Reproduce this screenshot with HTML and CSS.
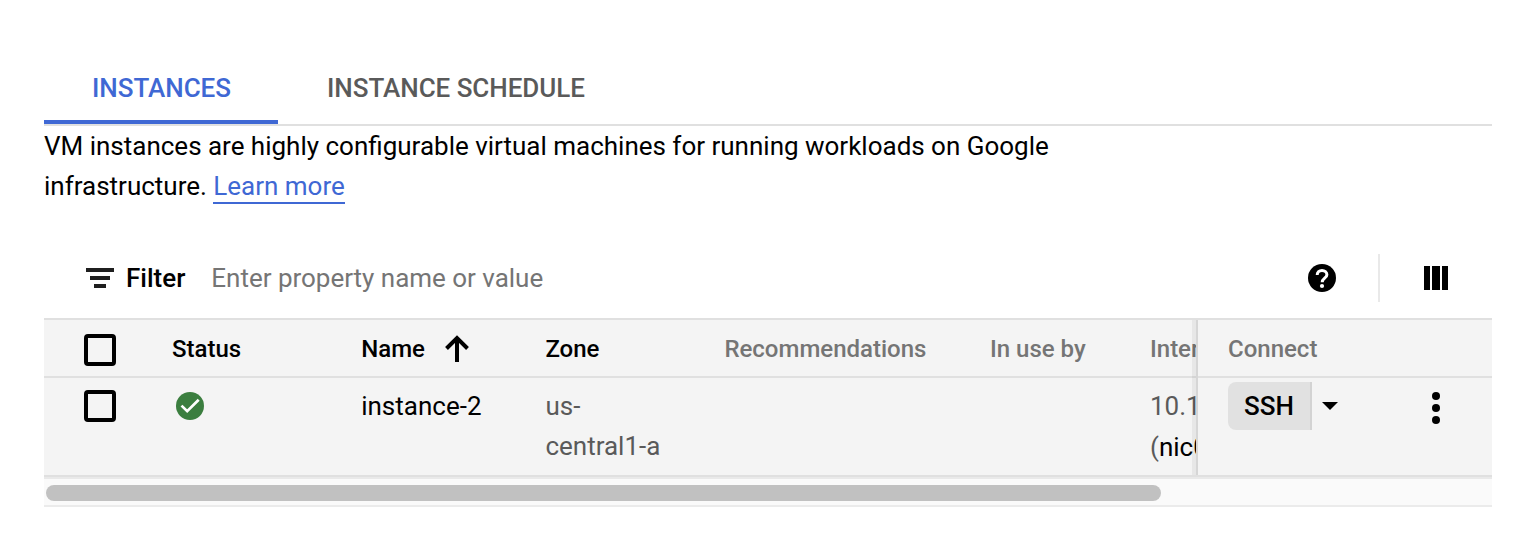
FILE: index.html
```html
<!DOCTYPE html>
<html lang="en">
<head>
<meta charset="utf-8">
<title>VM instances</title>
<link rel="stylesheet" href="styles.css">
</head>
<body>
<main class="page">
  <nav class="tabs">
    <a class="tab tab-active">INSTANCES</a>
    <a class="tab">INSTANCE SCHEDULE</a>
  </nav>
  <p class="intro">VM instances are highly configurable virtual machines for running workloads on Google infrastructure. <a class="link">Learn more</a></p>

  <section class="toolbar">
    <svg class="filter-icon" width="28" height="20" viewBox="0 0 28 20" fill="#1f1f1f"><path d="M0 0h28v4H0zM4 8h20v4H4zM8 16h12v4H8z"/></svg>
    <span class="filter-label">Filter</span>
    <span class="filter-hint">Enter property name or value</span>
    <svg class="help-icon" width="28" height="28" viewBox="0 0 28 28"><circle cx="14" cy="14" r="14"/><path d="M9.200 11C9.200 8.200 11.300 6.400 14 6.400s4.900 1.800 4.900 4.300c0 3.400-4.700 3.700-4.700 7.500" fill="none" stroke="#fff" stroke-width="3"/><circle cx="14" cy="22" r="2.100" fill="#fff"/></svg>
    <span class="divider"></span>
    <svg class="columns-icon" width="24" height="24" viewBox="0 0 24 24"><path d="M0 0h6v24H0zM8 0h8v24H8zM18 0h6v24h-6z"/></svg>
  </section>

  <section class="table">
    <div class="scroller">
      <div class="row head">
        <span class="box"></span>
        <span>Status</span>
        <span class="sorted">Name
          <svg class="arrow" width="24" height="27" viewBox="0 0 24 27" fill="none" stroke="#000" stroke-width="4"><path d="M12 27V3M1.500 13.500L12 3l10.500 10.500"/></svg>
        </span>
        <span>Zone</span>
        <span class="muted">Recommendations</span>
        <span class="muted">In use by</span>
        <span class="muted">Internal IP</span>
      </div>
      <div class="row body">
        <span class="box"></span>
        <span class="status"><svg width="28" height="28" viewBox="0 0 28 28"><circle cx="14" cy="14" r="14" fill="#3b7e3f"/><path d="M5.500 13.600l5.700 5.600L22.700 7.700" fill="none" stroke="#fff" stroke-width="2.700"/></svg></span>
        <span>instance-2</span>
        <span class="grey">us-<br>central1-a</span>
        <span></span>
        <span></span>
        <span class="grey address"><span>10.1</span><span class="nic-line">(<a class="nic">nic0</a></span></span>
      </div>
    </div>
    <div class="pinned">
      <div class="pinned-head">Connect</div>
      <div class="pinned-body">
        <button class="ssh">SSH</button>
        <svg class="caret" width="16" height="8" viewBox="0 0 16 8"><path d="M0 0h16L8 8z"/></svg>
        <svg class="more" width="8" height="32" viewBox="0 0 8 32"><circle cx="4" cy="4" r="4"/><circle cx="4" cy="16" r="4"/><circle cx="4" cy="28" r="4"/></svg>
      </div>
    </div>
  </section>
  <div class="scrollbar"><div class="thumb"></div></div>
</main>
</body>
</html>
```
FILE: styles.css
```css
* { box-sizing: border-box; }
body { margin: 0; background: #fff; color: #000; font: 400 26px/40px Roboto, sans-serif; }
svg { display: block; flex: none; }
.page { width: 1530px; height: 534px; padding: 52px 38px 0 44px; overflow: hidden; }
.tabs { display: flex; height: 74px; border-bottom: 2px solid #e0e0e0; }
.tab { height: 72px; padding: 0 48px; line-height: 72px; font-weight: 500; color: #5a5a5a; white-space: nowrap; letter-spacing: -0.04px; }
.tab-active { width: 234px; margin-right: 1px; color: #3f68d4; border-bottom: 4px solid #3f68d4; }
.intro { width: 1040px; height: 112px; margin: 0; word-spacing: -0.05px; }
.link { display: inline-block; height: 38px; color: #3f68d4; border-bottom: 2px solid #3f68d4; }
.toolbar { display: flex; align-items: center; height: 80px; padding: 0 44px 0 42px; }
.filter-label { margin-left: 12px; font-weight: 500; }
.filter-hint { margin-left: 26px; color: #757575; letter-spacing: -0.02px; }
.help-icon { margin-left: auto; }
.divider { width: 2px; height: 48px; margin: 0 44px 0 42px; background: #e9e9e9; }
.table { display: flex; height: 159px; background: #f4f4f4; border-top: 2px solid #e0e0e0; border-bottom: 2px solid #e0e0e0; }
.scroller { position: relative; width: 1152px; overflow: hidden; }
.scroller::after { content: ""; position: absolute; top: 0; right: 0; width: 4px; height: 155px; background: rgba(0, 0, 0, .05); }
.row { display: grid; grid-template-columns: 88px 189.200px 184.200px 179px 265.600px 160px 200px; width: 1306px; padding-left: 40px; white-space: nowrap; }
.head { height: 58px; font-size: 24px; font-weight: 500; line-height: 58px; border-bottom: 2px solid #e0e0e0; }
.body { height: 97px; padding-top: 8px; }
.box { width: 32px; height: 32px; border: 4px solid #000; border-radius: 4px; }
.head .box { margin-top: 14px; }
.body .box { margin-top: 4px; }
.sorted { display: flex; gap: 19.600px; }
.arrow { margin-top: 15px; }
.muted { color: #757575; }
.grey { color: #5a5a5a; }
.address { display: flex; flex-direction: column; gap: 1px; }
.nic { color: #000; }
.status { padding: 6px 0 0 4px; }
.pinned { flex: 1; border-left: 2px solid #d6d6d6; }
.pinned-head { height: 58px; padding-left: 30px; font-size: 24px; font-weight: 500; line-height: 58px; color: #757575; border-bottom: 2px solid #e0e0e0; }
.pinned-body { display: flex; padding: 4px 52px 0 30px; }
.ssh { width: 84px; height: 48px; padding: 0; font: 500 26px/48px Roboto, sans-serif; color: #000; background: #e1e1e1; border: 0; border-right: 2px solid #d3d3d3; border-radius: 8px 0 0 8px; }
.caret { margin: 20px 0 0 10px; }
.more { margin: 10px 0 0 auto; }
.scrollbar { height: 30px; padding: 8px 2px 0; background: #fafafa; border-bottom: 2px solid #ebebeb; box-shadow: inset 0 2px #e9e9e9; }
.thumb { width: 1115px; height: 16px; border-radius: 8px; background: #c1c1c1; }
```
